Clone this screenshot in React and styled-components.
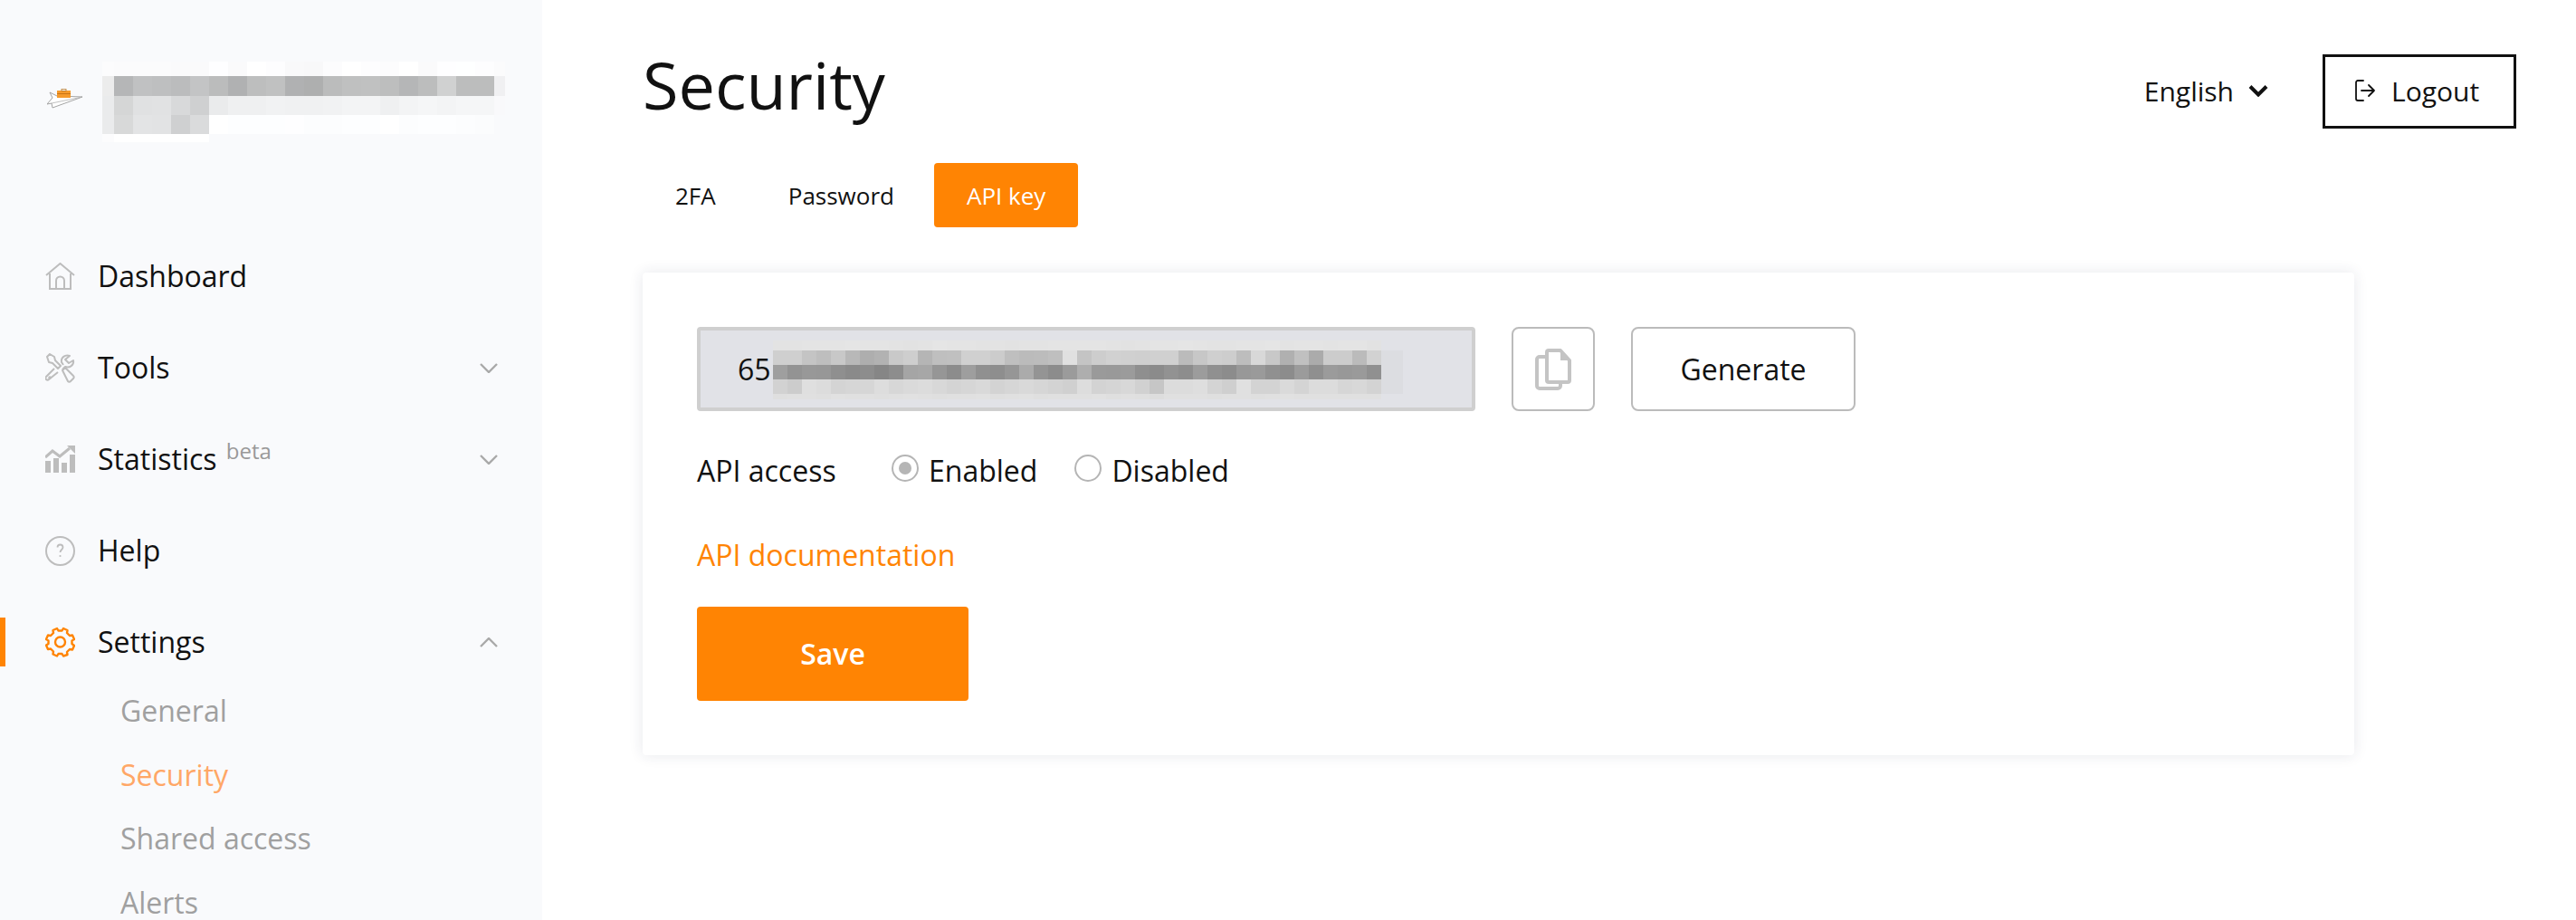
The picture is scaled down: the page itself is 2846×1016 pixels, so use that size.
import React from 'react'
import styled, { createGlobalStyle } from 'styled-components'

const orange = '#ff8403'
const ink = '#111111'

const GlobalStyle = createGlobalStyle`
  html, body { margin: 0; padding: 0; background: #fff; }
  body { font-family: "Open Sans", "Liberation Sans", sans-serif; color: ${ink}; }
  * { box-sizing: border-box; }
`

const Page = styled.div`
  display: flex;
  height: 100vh;
  overflow: hidden;
`

const Sidebar = styled.aside`
  width: 599px;
  flex-shrink: 0;
  height: 100%;
  overflow: hidden;
  background: #f9fafc;
  padding-top: 68px;
`

const Brand = styled.div`
  display: flex;
  align-items: center;
  height: 89px;
  padding-left: 52px;
  gap: 22px;
`

const LogoSvg = styled.svg`
  margin-bottom: 7px;
`

const Nav = styled.nav`
  display: flex;
  flex-direction: column;
  gap: 47px;
  margin-top: 121px;
`

const NavRow = styled.div`
  position: relative;
  display: flex;
  align-items: center;
  height: 54px;
  padding: 0 49px 0 50px;
  font-size: 32px;
  color: ${ink};

  ${p => p.$active && `
    &::before {
      content: '';
      position: absolute;
      left: 0;
      top: 0;
      bottom: 0;
      width: 6px;
      background: ${orange};
    }
  `}
`

const NavIcon = styled.span`
  display: flex;
  width: 33px;
  height: 34px;
  margin-right: 25px;
  align-items: center;
  justify-content: center;
`

const NavLabel = styled.span`
  flex: 1;
  margin-top: -2px;
  white-space: nowrap;
`

const Beta = styled.sup`
  font-size: 24px;
  line-height: 0;
  color: #999;
  margin-left: 2px;
`

const Caret = styled.svg`
  width: 20px;
  height: 11px;
  fill: none;
  stroke: #a9a9a9;
  stroke-width: 2.4;
  transform: ${p => (p.$up ? 'rotate(180deg)' : 'none')};
`

const SubNav = styled.div`
  margin-top: 14px;
  padding-left: 133px;
`

const SubItem = styled.div`
  height: 70.5px;
  line-height: 70.5px;
  font-size: 32px;
  color: ${p => (p.$active ? '#ffa766' : '#a0a0a0')};
`

const Main = styled.main`
  flex: 1;
  padding: 43px 66px 0 111px;
`

const Header = styled.header`
  display: flex;
  justify-content: space-between;
  align-items: flex-start;
`

const Title = styled.h1`
  margin: 0;
  font-size: 72px;
  font-weight: 400;
  line-height: 100px;
`

const Actions = styled.div`
  display: flex;
  align-items: center;
  margin-top: 17px;
`

const Language = styled.div`
  display: flex;
  align-items: center;
  gap: 16px;
  font-size: 30px;
  margin-right: 60px;
  padding-bottom: 2px;
`

const LogoutButton = styled.button`
  display: flex;
  align-items: center;
  gap: 18px;
  width: 214px;
  height: 82px;
  padding: 0 0 2px 33px;
  background: #fff;
  border: 3px solid ${ink};
  border-radius: 0;
  font: inherit;
  font-size: 30px;
  color: ${ink};
`

const Tabs = styled.div`
  display: flex;
  gap: 8px;
  margin-top: 37px;
`

const Tab = styled.div`
  display: flex;
  align-items: center;
  height: 71px;
  padding: 0 36px;
  border-radius: 4px;
  font-size: 26px;
  color: ${p => (p.$active ? '#fff' : ink)};
  background: ${p => (p.$active ? orange : 'transparent')};
`

const Card = styled.section`
  width: 1891px;
  margin-top: 50px;
  padding: 60px;
  background: #fff;
  border-radius: 4px;
  box-shadow: 0 0 16px rgba(40, 50, 80, 0.11);
`

const KeyRow = styled.div`
  display: flex;
  align-items: stretch;
  height: 93px;
`

const KeyField = styled.div`
  position: relative;
  display: flex;
  align-items: center;
  width: 860px;
  padding-left: 41px;
  background: #e1e2e7;
  border: 4px solid #cfcfcf;
  border-radius: 4px;
  font-size: 32px;
`

const KeyBlur = styled.div`
  position: absolute;
  left: 80px;
  top: 11px;
  line-height: 0;
`

const IconButton = styled.button`
  display: flex;
  align-items: center;
  justify-content: center;
  width: 92px;
  margin-left: 40px;
  background: #fff;
  border: 2px solid #bbb;
  border-radius: 8px;
`

const GenerateButton = styled.button`
  width: 248px;
  margin-left: 40px;
  background: #fff;
  border: 2px solid #bbb;
  border-radius: 8px;
  font: inherit;
  font-size: 32px;
  color: ${ink};
`

const AccessRow = styled.div`
  display: flex;
  align-items: center;
  height: 44px;
  margin-top: 44px;
  padding-bottom: 2px;
  font-size: 32px;
`

const AccessLabel = styled.span`
  width: 215px;
`

const RadioOption = styled.label`
  display: flex;
  align-items: center;
  gap: 11px;
  margin-right: 41px;
`

const RadioMark = styled.span`
  display: flex;
  align-items: center;
  justify-content: center;
  width: 30px;
  height: 30px;
  margin-bottom: 4px;
  border: 2px solid #b5b5b5;
  border-radius: 50%;
  background: #fff;

  &::after {
    content: '';
    width: 14px;
    height: 14px;
    border-radius: 50%;
    background: ${p => (p.$checked ? '#b5b5b5' : 'transparent')};
  }
`

const DocLink = styled.a`
  display: block;
  height: 44px;
  line-height: 42px;
  margin-top: 50px;
  font-size: 32px;
  color: ${orange};
  text-decoration: none;
`

const SaveButton = styled.button`
  display: block;
  width: 300px;
  height: 104px;
  margin-top: 34px;
  padding: 0 0 2px;
  background: ${orange};
  border: 0;
  border-radius: 4px;
  font: inherit;
  font-size: 32px;
  font-weight: 600;
  color: #fff;
`

// pixelated blur over the company name
const brandCols = [13, 21, 21, 21, 21, 21, 21, 21, 21, 21, 21, 21, 21, 21, 21, 21, 21, 21, 21, 21, 21, 12]
const brandRows = [
  { y: 0, h: 16, c: ['fcfcfd', 'fbfbfc', 'fbfbfc', 'fbfbfc', 'fafafb', 'fafafb', 'fefeff', 'fafafb', 'ffffff', 'fdfdfe', 'f9f9fa', 'f8f8f9', 'fcfcfd', 'ffffff', 'fdfdfe', 'fcfcfd', 'ffffff', 'fafafb', 'fefeff', 'feffff', 'fdfdfe', 'fbfbfc'] },
  { y: 16, h: 22, c: ['ececec', 'b5b6b7', 'c0c1c2', 'bebfc0', 'bbbcbd', 'c3c4c5', 'bbbcbc', 'b0b1b2', 'bdbebe', 'c0c1c1', 'b0b1b2', 'aeafaf', 'bbbcbc', 'bfc0c0', 'c0c1c1', 'bdbebe', 'b5b6b7', 'bcbdbd', 'd0d1d1', 'bcbdbd', 'bcbdbd', 'f0f0f2'] },
  { y: 38, h: 21, c: ['eaebec', 'd5d6d6', 'e0e1e2', 'e1e2e3', 'd8d9da', 'cfd0d1', 'eaebec', 'eff0f1', 'eff0f1', 'f1f2f3', 'f0f1f2', 'f0f1f2', 'f1f2f3', 'f3f4f5', 'f3f4f5', 'eff0f1', 'f3f4f5', 'f5f6f7', 'f3f4f5', 'f5f6f7', 'f5f6f7', 'f9f9fb'] },
  { y: 59, h: 21, c: ['eaebec', 'd8d9d9', 'e3e4e5', 'e2e3e4', 'cfd0d1', 'dadbdc', 'ffffff', 'fdfeff', 'fdfeff', 'fdfeff', 'fefeff', 'fcfdfe', 'fcfdfe', 'fdfeff', 'fdfeff', 'ffffff', 'fcfdfe', 'fdfeff', 'fdfeff', 'fcfdfe', 'fbfcfd', 'f9fafc'] },
  { y: 80, h: 9, c: ['fcfcfd', 'ffffff', 'ffffff', 'ffffff', 'ffffff', 'ffffff', 'f9fafc', 'f9fafc', 'f9fafc', 'f9fafc', 'f9fafc', 'f9fafc', 'f9fafc', 'f9fafc', 'f9fafc', 'f9fafc', 'f9fafc', 'f9fafc', 'f9fafc', 'f9fafc', 'f9fafc', 'f9fafc'] },
]

// pixelated blur over the api key
const keyRows = [
  { y: 0, h: 11, c: 'e3 e3 e4 e4 e4 e5 e4 e4 e3 e2 e3 e5 e4 e4 e3 e3 e2 e3 e3 e4 e4 e4 e4 e3 e2 e3 e4 e4 e5 e4 e3 e3 e4 e4 e5 e3 e4 e4 e3 e4 e4 e2' },
  { y: 11, h: 16, c: 'cf cf c4 be c8 b8 ae b2 c9 ce b5 bf c0 d0 d0 cc bf bb bc bf e0 c4 cd d1 d0 cf d0 d0 bb c7 cf cd bd d8 c8 b0 c0 ab cc cc bb d2' },
  { y: 27, h: 16, c: '9f 93 98 97 8f 8a 8d 86 8d a5 a7 96 8c 9e 90 8e 96 ab 94 8c 9b ae 9a 99 9b 8f 8b 92 8d 9c 90 8c 98 9a 90 8c 9b 8f 9b 98 9a 90' },
  { y: 43, h: 16, c: 'd2 cc df dc d4 d6 d6 dd d7 da dc d8 d4 d6 d9 d3 d6 d9 d6 d3 d0 dd d3 d5 d8 d1 c6 dc dc de d4 cf e0 d3 d3 da d4 dc dc d6 d8 d3' },
  { y: 59, h: 6, c: 'df e0 e0 df e1 e0 e0 df e0 e1 e0 df e0 e0 e1 df e0 e1 df e0 e0 e0 e1 df e0 df dd e0 e0 e0 df e0 e0 df e0 e1 e0 e0 e0 e0 e0 e0' },
]

const LogoMark = () => (
  <LogoSvg width="39" height="22" viewBox="0 0 39 22">
    <path d="M3 4l8 4 28 1-33 12-1-5-5 1 6-7z" fill="#fff" stroke="#9a9a9a" strokeWidth="0.9" strokeLinejoin="round" />
    <path d="M5 16l34-7" stroke="#b0b0b0" strokeWidth="0.8" fill="none" />
    <path d="M11 2h15v8H11z" fill="#f59a2c" />
    <rect x="11" y="5" width="15" height="1" fill="#c87414" />
    <rect x="16" y="0.500" width="5" height="2" fill="none" stroke="#b97a2c" strokeWidth="0.8" />
  </LogoSvg>
)

const BrandBlur = () => {
  let x = 0
  const starts = brandCols.map(w => { const s = x; x += w; return s })
  return (
    <svg width={x} height="89">
      {brandRows.map(row => row.c.map((color, i) => (
        <rect key={`${row.y}-${i}`} x={starts[i]} y={row.y} width={brandCols[i]} height={row.h} fill={`#${color}`} />
      )))}
    </svg>
  )
}

const KeyPixels = () => (
  <svg width="696" height="65">
    {keyRows.map(row => row.c.split(' ').map((g, i) => (
      <rect key={`${row.y}-${i}`} x={i * 16} y={row.y} width="16" height={row.h} fill={`#${g}${g}${g}`} />
    )))}
    <rect x="672" y="11" width="24" height="48" fill="#dcdde1" />
  </svg>
)

const line = { fill: 'none', stroke: '#bdbdbd', strokeWidth: 2 }

const HomeIcon = () => (
  <svg width="33" height="30" viewBox="0 0 33 30" {...line}>
    <path d="M1 14L16.5 1 32 14" />
    <path d="M5 12v17h23V12" />
    <path d="M12 29v-9a4.5 4.5 0 0 1 9 0v9" />
  </svg>
)

const ToolsIcon = () => (
  <svg width="33" height="33" viewBox="0 0 33 33" {...line} strokeLinejoin="round">
    <path d="M2 4l3-3 5 3 1 4 6 6-3 3-6-6-4-1z" />
    <path d="M19 19l3-3 9 9a2 2 0 0 1 0 3l-3 3a2 2 0 0 1-3 0z" />
    <path d="M14 21l-10 8a2 2 0 0 1-3-3l9-9" />
    <path d="M20 13l-2-3c-1-5 4-9 9-7l-5 4 4 4 5-3c1 5-4 9-9 7l-3 3" />
    <circle cx="5" cy="27" r="0.8" />
  </svg>
)

const StatsIcon = () => (
  <svg width="33" height="30" viewBox="0 0 33 30" fill="#bdbdbd">
    <rect x="0" y="17" width="6" height="13" />
    <rect x="9" y="14" width="6" height="16" />
    <rect x="18" y="19" width="6" height="11" />
    <rect x="27" y="10" width="6" height="20" />
    <path d="M0 13l8-7 8 6 11-9" fill="none" stroke="#bdbdbd" strokeWidth="3" />
    <path d="M24 0h9v9z" />
  </svg>
)

const HelpIcon = () => (
  <svg width="33" height="33" viewBox="0 0 33 33" {...line}>
    <circle cx="16.5" cy="16.5" r="15.5" />
    <path d="M13.5 12.5c0-4 6-4 6 0 0 2.5-3 2.5-3 5.5" strokeWidth="1.8" />
    <circle cx="16.5" cy="22" r="1.1" fill="#bdbdbd" stroke="none" />
  </svg>
)

const GearIcon = () => (
  <svg width="33" height="34" viewBox="0 0 33 34" fill="none" stroke={orange} strokeWidth="2.4" strokeLinejoin="round">
    <path d="M13 2l1.5 2.5h4L20 2l4.5 2-.5 3 3 3 3-.5 2 4.500-2.500 1.500v3.500L32 21l-2 4.500-3-.5-3 3 .5 3L20 32.500 18.500 30h-4L13 32.500 8.500 30.500l.5-3-3-3-3 .5L1 20.500l2.500-1.500v-3.500L1 14l2-4.500 3 .5 3-3-.5-3z" />
    <circle cx="16.5" cy="17" r="5.500" />
  </svg>
)

const ChevronDown = () => (
  <svg width="22" height="14" viewBox="0 0 22 14" fill="none" stroke={ink} strokeWidth="4">
    <path d="M2 2.500l9 9 9-9" />
  </svg>
)

const LogoutIcon = () => (
  <svg width="22" height="24" viewBox="0 0 22 24" fill="none" stroke={ink} strokeWidth="1.8" strokeLinecap="round" strokeLinejoin="round">
    <path d="M9 1H3a2 2 0 0 0-2 2v18a2 2 0 0 0 2 2h6" />
    <path d="M7 12h14M15 6l6 6-6 6" />
  </svg>
)

const CopyIcon = () => (
  <svg width="40" height="46" viewBox="0 0 40 46" fill="none" stroke="#c4c4c4" strokeWidth="4" strokeLinejoin="round">
    <path d="M12 9H5a3 3 0 0 0-3 3v29a3 3 0 0 0 3 3h20a3 3 0 0 0 3-3v-3" />
    <path d="M15 2h13l10 11v22a2 2 0 0 1-2 2H15a2 2 0 0 1-2-2V4a2 2 0 0 1 2-2z" />
    <path d="M28 2l10 11H28z" fill="#c4c4c4" stroke="none" />
  </svg>
)

const Chevron = ({ up }) => (
  <Caret $up={up} viewBox="0 0 20 11">
    <path d="M1 1l9 9 9-9" />
  </Caret>
)

const App = () => {
  return (
    <Page>
      <GlobalStyle />
      <Sidebar>
        <Brand>
          <LogoMark />
          <BrandBlur />
        </Brand>
        <Nav>
          <NavRow>
            <NavIcon><HomeIcon /></NavIcon>
            <NavLabel>Dashboard</NavLabel>
          </NavRow>
          <NavRow>
            <NavIcon><ToolsIcon /></NavIcon>
            <NavLabel>Tools</NavLabel>
            <Chevron />
          </NavRow>
          <NavRow>
            <NavIcon><StatsIcon /></NavIcon>
            <NavLabel>Statistics <Beta>beta</Beta></NavLabel>
            <Chevron />
          </NavRow>
          <NavRow>
            <NavIcon><HelpIcon /></NavIcon>
            <NavLabel>Help</NavLabel>
          </NavRow>
          <div>
            <NavRow $active>
              <NavIcon><GearIcon /></NavIcon>
              <NavLabel>Settings</NavLabel>
              <Chevron up />
            </NavRow>
            <SubNav>
              <SubItem>General</SubItem>
              <SubItem $active>Security</SubItem>
              <SubItem>Shared access</SubItem>
              <SubItem>Alerts</SubItem>
            </SubNav>
          </div>
        </Nav>
      </Sidebar>

      <Main>
        <Header>
          <Title>Security</Title>
          <Actions>
            <Language>English <ChevronDown /></Language>
            <LogoutButton><LogoutIcon /> Logout</LogoutButton>
          </Actions>
        </Header>

        <Tabs>
          <Tab>2FA</Tab>
          <Tab>Password</Tab>
          <Tab $active>API key</Tab>
        </Tabs>

        <Card>
          <KeyRow>
            <KeyField>
              65
              <KeyBlur><KeyPixels /></KeyBlur>
            </KeyField>
            <IconButton><CopyIcon /></IconButton>
            <GenerateButton>Generate</GenerateButton>
          </KeyRow>

          <AccessRow>
            <AccessLabel>API access</AccessLabel>
            <RadioOption><RadioMark $checked />Enabled</RadioOption>
            <RadioOption><RadioMark />Disabled</RadioOption>
          </AccessRow>

          <DocLink href="#">API documentation</DocLink>
          <SaveButton>Save</SaveButton>
        </Card>
      </Main>
    </Page>
  )
}

export default App
